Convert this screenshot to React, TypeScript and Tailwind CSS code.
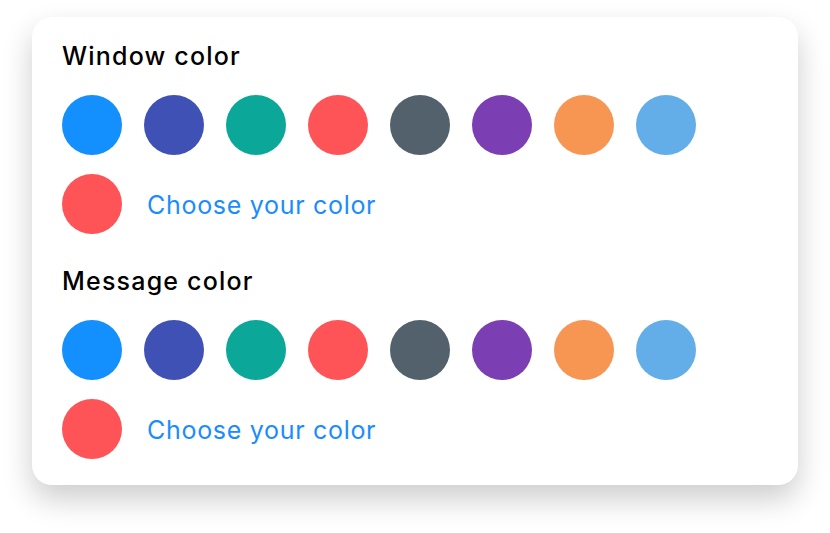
const swatches = ['#1390fe', '#3f51b5', '#0ba899', '#fe5457', '#52616b', '#7b3fb3', '#f79552', '#63aee8'];

const ColorSection = ({ title, className }: { title: string; className?: string }) => {
  return (
    <div className={className}>
      <h2 className="text-[25px] leading-[30px] font-medium text-black tracking-[1.2px]">{title}</h2>
      <div className="mt-6 flex flex-wrap items-center gap-x-[22px] gap-y-[19px]">
        {swatches.map((c) => (
          <button key={c} className="w-[60px] h-[60px] rounded-full" style={{ backgroundColor: c }} />
        ))}
        <div className="flex items-center">
          <button className="w-[60px] h-[60px] rounded-full bg-[#fe5457]" />
          <span className="ml-[25px] mt-[4px] text-[25px] font-normal text-[#1a8cff] tracking-[0.7px]">Choose your color</span>
        </div>
      </div>
    </div>
  );
};

export default function App() {
  return (
    <div className="w-[830px] h-[533px] bg-white pl-[32px] pt-[17px]" style={{ fontFamily: 'Inter, "Noto Sans", sans-serif' }}>
      <div className="w-[766px] h-[468px] bg-white rounded-[20px] shadow-[0_14px_30px_rgba(0,0,0,0.2)] px-[30px] pt-[24px] pb-[27px]">
        <ColorSection title="Window color" />
        <ColorSection title="Message color" className="mt-[32px]" />
      </div>
    </div>
  );
}
